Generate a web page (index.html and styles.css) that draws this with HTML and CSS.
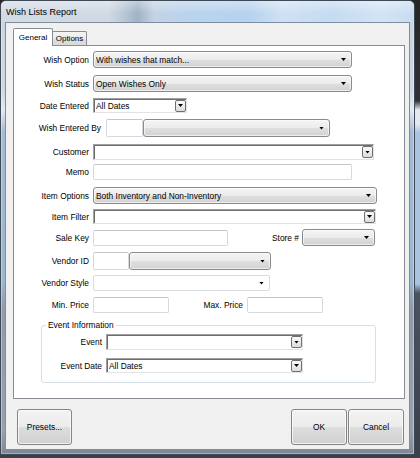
FILE: index.html
```html
<!DOCTYPE html>
<html>
<head>
<meta charset="utf-8">
<title>Wish Lists Report</title>
<link rel="stylesheet" href="styles.css">
</head>
<body>
<div class="window">
  <div class="titlebar">Wish Lists Report</div>
  <div class="client">
    <div class="tabs">
      <div class="tab active">General</div>
      <div class="tab">Options</div>
    </div>
    <div class="panel">
      <div class="form">
        <div class="row"><span class="lbl">Wish Option</span><div class="ddl w-259"><span class="val">With wishes that match...</span></div></div>
        <div class="row"><span class="lbl">Wish Status</span><div class="ddl w-259"><span class="val">Open Wishes Only</span></div></div>
        <div class="row"><span class="lbl">Date Entered</span><div class="combo w-94"><span class="val">All Dates</span><span class="cbtn"></span></div></div>
        <div class="row"><span class="lbl lbl-wide">Wish Entered By</span><div class="txt tall w-37"></div><div class="ddl tall w-187"></div></div>
        <div class="row"><span class="lbl">Customer</span><div class="combo h16 w-281"><span class="val"></span><span class="cbtn"></span></div></div>
        <div class="row"><span class="lbl">Memo</span><div class="txt w-259"></div></div>
        <div class="row"><span class="lbl">Item Options</span><div class="ddl w-284"><span class="val">Both Inventory and Non-Inventory</span></div></div>
        <div class="row"><span class="lbl">Item Filter</span><div class="combo w-283"><span class="val"></span><span class="cbtn"></span></div></div>
        <div class="row"><span class="lbl">Sale Key</span><div class="txt w-135"></div><span class="lbl-inline store">Store #</span><div class="ddl w-73"></div></div>
        <div class="row"><span class="lbl">Vendor ID</span><div class="txt tall w-36"></div><div class="ddl tall w-142"></div></div>
        <div class="row"><span class="lbl">Vendor Style</span><div class="flat w-177"></div></div>
        <div class="row"><span class="lbl">Min. Price</span><div class="txt w-76"></div><span class="lbl-inline maxp">Max. Price</span><div class="txt w-76"></div></div>
        <fieldset class="group">
          <legend>Event Information</legend>
          <div class="grp-rows">
            <div class="row"><span class="lbl lbl-grp">Event</span><div class="combo h16 w-197"><span class="val"></span><span class="cbtn"></span></div></div>
            <div class="row"><span class="lbl lbl-grp">Event Date</span><div class="combo w-197"><span class="val">All Dates</span><span class="cbtn"></span></div></div>
          </div>
        </fieldset>
      </div>
    </div>
    <div class="footer">
      <button class="btn presets">Presets...</button>
      <button class="btn ok">OK</button>
      <button class="btn">Cancel</button>
    </div>
  </div>
</div>
</body>
</html>
```

FILE: styles.css
```css
* { box-sizing: border-box; }

html, body { margin: 0; padding: 0; }

body {
  width: 420px;
  height: 458px;
  overflow: hidden;
  font-family: "Liberation Sans", Arial, sans-serif;
  font-size: 8.4px;
  color: #000;
  background: linear-gradient(180deg, #262626 0, #2e3138 22%, #e4e9ef 24%, #e4e9ef 27%, #aac4e0 29%, #aac4e0 62%, #4a5360 64%, #3a404a 100%);
}

.window {
  width: 415px;
  height: 455px;
  border: 1px solid #3e4955;
  border-radius: 6px 6px 0 0;
  padding: 0 4px 4px;
  display: flex;
  flex-direction: column;
  background: linear-gradient(180deg, #c9d4df 0, #cdd8e3 20%, #e3e9ef 24%, #a3bbd4 29%, #9db6d0 62%, #8e9cab 68%, #96a2ae 95%, #7d8894 100%);
  box-shadow: inset 0 0 0 1px rgba(255, 255, 255, 0.35);
}

.titlebar {
  height: 21px;
  margin: 0 -4px;
  padding-left: 5px;
  line-height: 22px;
  font-size: 9px;
  color: #000;
  border-radius: 5px 5px 0 0;
  background:
    linear-gradient(180deg, rgba(255,255,255,0.35) 0, rgba(255,255,255,0) 60%),
    linear-gradient(90deg, #d3dbe4 0, #d0d9e3 26%, #b7c6d5 30%, #9fb2c6 33%, #c3d3e4 37%, #b9d4ee 45%, #b6d2ee 60%, #cfe1f4 68%, #c4dbf1 80%, #d3e4f5 92%, #c9dcf0 100%);
}

.client {
  width: 405px;
  height: 428px;
  border: 1px solid #7f8e9e;
  background: #f0f0f0;
  padding-top: 5px;
  display: flex;
  flex-direction: column;
}

/* Tabs */
.tabs {
  display: flex;
  align-items: flex-end;
  height: 17px;
  margin-left: 7px;
}

.tab {
  border: 1px solid #898c95;
  border-bottom: none;
  border-radius: 2px 2px 0 0;
  font-size: 8px;
  text-align: center;
}

.tab.active {
  position: relative;
  z-index: 1;
  width: 40px;
  height: 18px;
  line-height: 17px;
  margin-bottom: -1px;
  background: #fff;
}

.tab:not(.active) {
  width: 35px;
  height: 14px;
  line-height: 14px;
  margin-left: -1px;
  background: linear-gradient(180deg, #f4f4f4 0, #ebebeb 50%, #dedede 51%, #dadada 100%);
}

.panel {
  margin: 0 4px 0 7px;
  height: 354px;
  border: 1px solid #898c95;
  background: #fff;
  padding-top: 5px;
}

/* Form grid */
.form {
  display: grid;
  grid-template-rows: 24px 23px 21px 25px 20px 23px 22px 20px 23px 23px 22px 22px auto;
  align-items: start;
}

.row {
  display: flex;
  align-items: center;
}

.lbl {
  width: 75px;
  margin-right: 4px;
  text-align: right;
  white-space: nowrap;
}

.lbl-wide { width: 87px; margin-right: 5px; }
.lbl-grp { width: 60px; margin-right: 4px; }

.lbl-inline { text-align: right; white-space: nowrap; }
.store { width: 71px; margin-right: 3px; }
.maxp { width: 74px; margin-right: 4px; }

.val {
  flex: 1;
  white-space: nowrap;
  overflow: hidden;
}

/* Drop-down list (Win7 button look) */
.ddl {
  height: 17px;
  display: flex;
  align-items: center;
  padding: 0 5px 0 2px;
  border: 1px solid #8a8a8a;
  border-radius: 3px;
  background: linear-gradient(180deg, #f4f4f4 0, #ececec 50%, #dfdfdf 51%, #d2d2d2 100%);
  box-shadow: inset 0 0 0 1px rgba(255, 255, 255, 0.6);
}

.ddl::after,
.flat::after,
.cbtn::after {
  content: "";
  width: 5px;
  height: 3px;
  margin-left: auto;
  background: #000;
  clip-path: polygon(0 0, 100% 0, 50% 100%);
}

.flat {
  height: 16px;
  display: flex;
  align-items: center;
  padding: 0 5px 0 2px;
  border: 1px solid #d9dbe0;
  border-radius: 2px;
  background: #fff;
}

/* Editable combo box */
.combo {
  height: 15px;
  display: flex;
  align-items: center;
  padding-left: 2px;
  background: #fff;
  border: 1px solid;
  border-color: #a0a0a0 #e3e3e3 #e3e3e3 #a0a0a0;
  box-shadow: inset 1px 1px 0 #6e6e6e;
}

.combo.h16 { height: 16px; }

.cbtn {
  width: 11px;
  height: 12px;
  display: flex;
  align-items: center;
  justify-content: center;
  border: 1px solid #6f6f6f;
  border-radius: 2px;
  background: linear-gradient(180deg, #fafafa 0, #ececec 50%, #dcdcdc 100%);
}

.cbtn::after { margin-left: 0; }

/* Text box */
.txt {
  height: 16px;
  background: #fff;
  border: 1px solid #d6d9df;
  border-top-color: #c2c6cd;
  border-radius: 2px;
}

.tall { height: 18px; }

.w-36 { width: 36px; }
.w-37 { width: 37px; }
.w-73 { width: 73px; }
.w-76 { width: 76px; }
.w-94 { width: 94px; }
.w-135 { width: 135px; }
.w-142 { width: 142px; }
.w-177 { width: 177px; }
.w-187 { width: 187px; }
.w-197 { width: 197px; }
.w-259 { width: 259px; }
.w-281 { width: 281px; }
.w-283 { width: 283px; }
.w-284 { width: 284px; }

/* Group box */
.group {
  margin: 0 0 0 27px;
  width: 335px;
  padding: 3px 0 9px 0;
  border: 1px solid #d5dfe5;
  border-radius: 3px;
  min-width: 0;
}

.group legend {
  margin-left: 4px;
  padding: 0 2px;
  line-height: 12px;
  font-size: 8.4px;
}

.grp-rows {
  display: grid;
  grid-template-rows: 24px auto;
  align-items: start;
}

/* Footer buttons */
.footer {
  display: flex;
  margin-top: 10px;
  padding: 0 5px 0 11px;
  gap: 1px;
}

.btn {
  width: 56px;
  height: 36px;
  padding: 0;
  font-family: "Liberation Sans", Arial, sans-serif;
  font-size: 8.4px;
  color: #000;
  border: 1px solid #858585;
  border-radius: 3px;
  background: linear-gradient(180deg, #f3f3f3 0, #ebebeb 50%, #dddddd 51%, #d0d0d0 100%);
  box-shadow: inset 0 0 0 1px rgba(255, 255, 255, 0.7);
}

.presets { width: 55px; }
.ok { margin-left: auto; }
```
